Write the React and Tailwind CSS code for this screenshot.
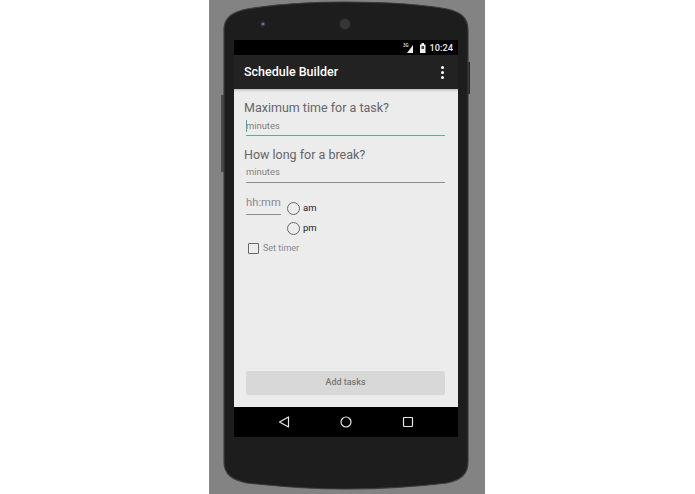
const font = { fontFamily: '"Roboto", "Liberation Sans", sans-serif' };

function PhoneBody() {
  return (
    <svg className="absolute left-0 top-0" width="276" height="494" viewBox="0 0 276 494">
      {/* side buttons */}
      <rect x="258" y="62" width="3" height="32" fill="#2a2a2a" />
      <rect x="12" y="95" width="3" height="77" fill="#4a4a4a" />
      <path
        d="M15 30 C15 17 24 12 38 9 C75 3 105 2 137 2 C170 2 205 3 238 9 C251 12 259 17 259 30 L259 462 C259 475 251 480 238 483 C205 487 170 489 137 489 C105 489 75 487 38 483 C24 480 15 475 15 462 Z"
        fill="#1d1d1d"
        stroke="#3c3c3c"
        strokeWidth="1.2"
      />
      <circle cx="54" cy="24" r="2.5" fill="#3a3a48" />
      <circle cx="54" cy="24" r="1" fill="#8a8a9a" />
      <circle cx="136" cy="24" r="5.5" fill="#363636" stroke="#262626" />
    </svg>
  );
}

function StatusIcons() {
  return (
    <svg width="24" height="12" viewBox="0 0 24 12">
      <path d="M4 11 L10 11 L10 3 Z" fill="#eeeeee" />
      <text x="0" y="4.5" fontSize="4.5" fontWeight="700" fill="#cccccc">3G</text>
      <rect x="17" y="2.5" width="5.5" height="8.5" fill="#eeeeee" />
      <rect x="18.5" y="1" width="2.5" height="2" fill="#eeeeee" />
      <rect x="18.5" y="4" width="2.5" height="3" fill="#444444" />
    </svg>
  );
}

function Radio({ label }) {
  return (
    <div className="flex items-center gap-[3px] h-5">
      <span className="w-[13px] h-[13px] rounded-full border-[1.5px] border-[#666666]" />
      <span className="text-[9.5px] text-[#222222]">{label}</span>
    </div>
  );
}

function NavIcons() {
  return (
    <div className="h-[30px] bg-black flex items-center text-[#e8e8e8]">
      <div className="flex w-full justify-between pl-[44px] pr-[44px]">
        <svg width="12" height="12" viewBox="0 0 12 12" fill="none" stroke="currentColor" strokeWidth="1.2">
          <path d="M10.5 1 L10.5 11 L1.5 6 Z" strokeLinejoin="round" />
        </svg>
        <svg width="12" height="12" viewBox="0 0 12 12" fill="none" stroke="currentColor" strokeWidth="1.2">
          <circle cx="6" cy="6" r="5" />
        </svg>
        <svg width="12" height="12" viewBox="0 0 12 12" fill="none" stroke="currentColor" strokeWidth="1.2">
          <rect x="1.5" y="1.5" width="9" height="9" rx="0.8" />
        </svg>
      </div>
    </div>
  );
}

export default function App() {
  return (
    <div className="w-[695px] h-[494px] bg-white overflow-hidden" style={font}>
      <div className="relative ml-[209px] w-[276px] h-[494px] bg-[#838383]">
        <PhoneBody />
        <div className="relative pt-[40px] pl-[25px]">
          <div className="w-[224px]">
            {/* Status bar */}
            <div className="h-[15px] bg-black flex items-center justify-end gap-[3px] pr-[5px]">
              <StatusIcons />
              <span className="text-[9.25px] font-medium text-[#eeeeee] leading-none">10:24</span>
            </div>

            {/* App bar */}
            <div className="h-[34px] bg-[#222222] flex items-center justify-between pl-[10px] pr-[14px]">
              <span className="text-[12.5px] font-medium text-white">Schedule Builder</span>
              <div className="flex flex-col gap-[2px]">
                <span className="w-[3px] h-[3px] rounded-full bg-white" />
                <span className="w-[3px] h-[3px] rounded-full bg-white" />
                <span className="w-[3px] h-[3px] rounded-full bg-white" />
              </div>
            </div>

            {/* Content */}
            <div className="h-[318px] bg-[#ececec] flex flex-col pl-[10px] pr-[13px] pt-[11px] shadow-[inset_0_3px_3px_-2px_rgba(0,0,0,0.25)]">
              <p className="text-[12.5px] leading-[16px] text-[#666666]">Maximum time for a task?</p>
              <div className="ml-[2px] mt-[3px] h-[17px] border-b border-[#6ba595] flex items-center relative">
                <span className="absolute left-0 top-[1px] w-px h-[12px] bg-[#5f9d8d]" />
                <span className="text-[9.4px] text-[#808080] -mt-[2px]">minutes</span>
              </div>

              <p className="text-[12.5px] leading-[16px] text-[#666666] mt-[11px]">How long for a break?</p>
              <div className="ml-[2px] mt-[3px] h-[17px] border-b border-[#8c8c8c] flex items-center">
                <span className="text-[9.4px] text-[#808080] -mt-[3px]">minutes</span>
              </div>

              <div className="flex mt-[12px] ml-[2px]">
                <div className="w-[35px] h-[20px] border-b border-[#8c8c8c]">
                  <span className="text-[11.25px] leading-[16px] block text-[#8a8a8a]">hh:mm</span>
                </div>
                <div className="flex flex-col ml-[6px] mt-[3px]">
                  <Radio label="am" />
                  <Radio label="pm" />
                </div>
              </div>

              <div className="flex items-center ml-[4px] mt-[2px] h-[16px]">
                <span className="w-[11px] h-[11px] border-[1.5px] border-[#666666] rounded-[1px]" />
                <span className="text-[9px] text-[#8a8a8a] ml-[4px] mt-[1px]">Set timer</span>
              </div>

              <div className="mt-auto mb-[12px] ml-[2px] h-[24px] bg-[#d7d8d7] rounded-[2px] flex items-center justify-center">
                <span className="text-[9px] font-medium text-[#777777]">Add tasks</span>
              </div>
            </div>

            <NavIcons />
          </div>
        </div>
      </div>
    </div>
  );
}
